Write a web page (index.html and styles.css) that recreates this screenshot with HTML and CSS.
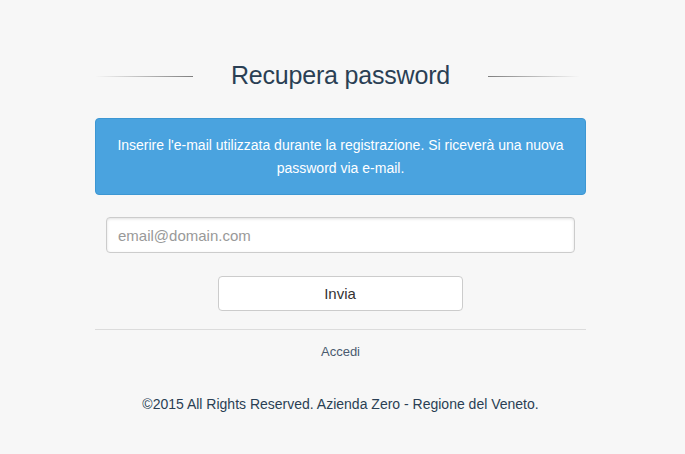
FILE: index.html
```html
<!DOCTYPE html>
<html lang="it">
<head>
<meta charset="utf-8">
<title>Recupera password</title>
<link rel="stylesheet" href="styles.css">
</head>
<body>
<div class="page">
  <div class="wrap">
    <div class="title-row">
      <span class="line line-left"></span>
      <h1 class="title">Recupera password</h1>
      <span class="line line-right"></span>
    </div>
    <div class="alert">Inserire l'e-mail utilizzata durante la registrazione. Si riceverà una nuova password via e-mail.</div>
    <form class="form">
      <input class="input" type="text" placeholder="email@domain.com">
      <button class="btn" type="button">Invia</button>
    </form>
    <div class="sep"></div>
    <a class="link" href="#">Accedi</a>
    <p class="footer">©2015 All Rights Reserved. Azienda Zero - Regione del Veneto.</p>
  </div>
</div>
</body>
</html>
```
FILE: styles.css
```css
html, body {
  margin: 0;
  padding: 0;
  background: #f7f7f7;
  font-family: "Liberation Sans", Arial, sans-serif;
}
.page {
  padding: 59px 4px 0 0;
}
.wrap {
  width: 491px;
  margin: 0 auto;
  display: flex;
  flex-direction: column;
  align-items: stretch;
}
.title-row {
  display: flex;
  align-items: center;
  justify-content: space-between;
  height: 32px;
}
.line {
  height: 1px;
  width: 98px;
  margin-top: 2px;
}
.line-left {
  background: linear-gradient(to right, rgba(120,120,120,0), #7f7f7f);
}
.line-right {
  width: 92px;
  margin-right: 6px;
  background: linear-gradient(to right, #7f7f7f, rgba(120,120,120,0));
}
.title {
  margin: 0;
  font-size: 25px;
  font-weight: normal;
  color: #2a3f54;
  letter-spacing: -0.2px;
  line-height: 32px;
}
.alert {
  margin-top: 27px;
  background: #4aa3df;
  border: 1px solid #3d97d3;
  border-radius: 4px;
  color: #fff;
  font-size: 14px;
  line-height: 23px;
  text-align: center;
  padding: 15px 18px 14px;
}
.form {
  display: flex;
  flex-direction: column;
  align-items: center;
  margin-top: 22px;
}
.input {
  box-sizing: border-box;
  width: 469px;
  height: 36px;
  border: 1px solid #ccc;
  border-radius: 4px;
  background: #fff;
  box-shadow: inset 0 1px 3px rgba(0,0,0,0.12);
  padding: 0 11px;
  font-family: "Liberation Sans", Arial, sans-serif;
  font-size: 15px;
  color: #555;
}
.input::placeholder {
  color: #999;
}
.btn {
  box-sizing: border-box;
  margin-top: 23px;
  width: 245px;
  height: 35px;
  background: #fff;
  border: 1px solid #ccc;
  border-radius: 4px;
  font-family: "Liberation Sans", Arial, sans-serif;
  font-size: 15px;
  color: #333;
  margin-left: -1px;
}
.sep {
  margin-top: 18px;
  height: 1px;
  background: #dcdcdc;
}
.link {
  margin-top: 14px;
  align-self: center;
  font-size: 13px;
  color: #4a5a6f;
  text-decoration: none;
  line-height: 16px;
}
.footer {
  margin: 36px 0 0;
  text-align: center;
  font-size: 14px;
  color: #2a3f54;
  line-height: 17px;
}
```
